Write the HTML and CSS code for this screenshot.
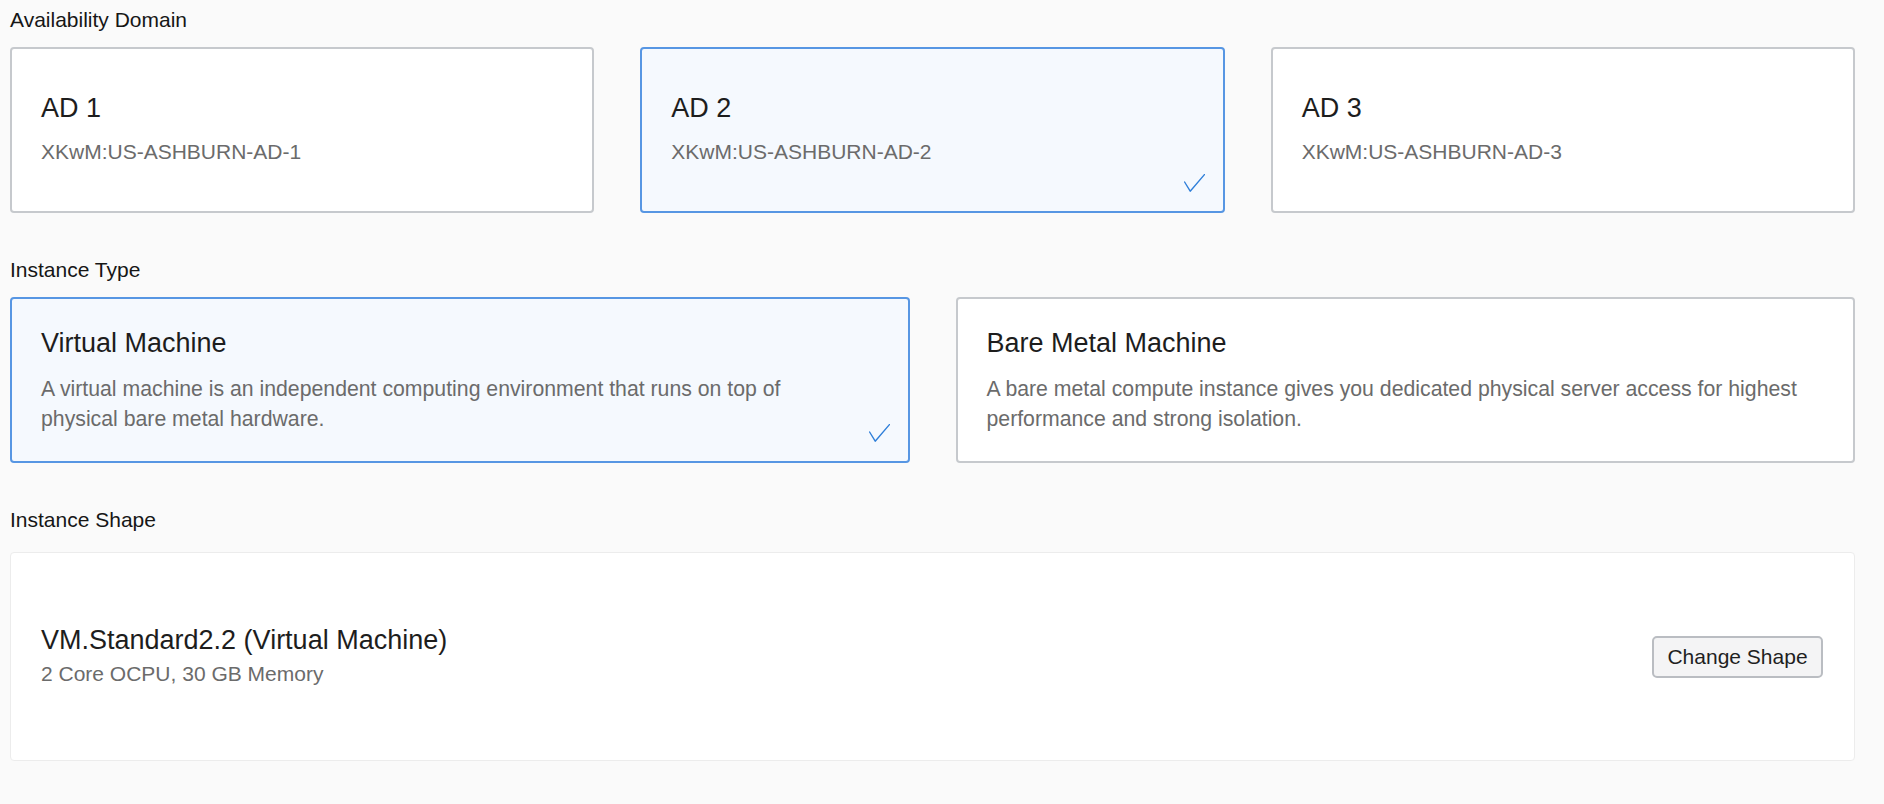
FILE: index.html
```html
<!DOCTYPE html>
<html lang="en">
<head>
<meta charset="utf-8">
<title>Create Instance</title>
<link rel="stylesheet" href="styles.css">
</head>
<body>
<div class="page">
  <section class="field">
    <div class="field-label">Availability Domain</div>
    <div class="options options-3">
      <div class="option option-ad">
        <div class="option-title">AD 1</div>
        <div class="option-text">XKwM:US-ASHBURN-AD-1</div>
      </div>
      <div class="option option-ad option-selected">
        <div class="option-title">AD 2</div>
        <div class="option-text">XKwM:US-ASHBURN-AD-2</div>
        <svg class="check" viewBox="0 0 21 18" aria-hidden="true"><polyline points="0.6,8 6.2,17.2 20.4,0.6"/></svg>
      </div>
      <div class="option option-ad">
        <div class="option-title">AD 3</div>
        <div class="option-text">XKwM:US-ASHBURN-AD-3</div>
      </div>
    </div>
  </section>

  <section class="field">
    <div class="field-label">Instance Type</div>
    <div class="options options-2">
      <div class="option option-selected">
        <div class="option-title">Virtual Machine</div>
        <div class="option-text option-desc">A virtual machine is an independent computing environment that runs on top of physical bare metal hardware.</div>
        <svg class="check" viewBox="0 0 21 18" aria-hidden="true"><polyline points="0.6,8 6.2,17.2 20.4,0.6"/></svg>
      </div>
      <div class="option">
        <div class="option-title">Bare Metal Machine</div>
        <div class="option-text option-desc">A bare metal compute instance gives you dedicated physical server access for highest performance and strong isolation.</div>
      </div>
    </div>
  </section>

  <section class="field field-shape">
    <div class="field-label">Instance Shape</div>
    <div class="shape-card">
      <div class="shape-info">
        <div class="shape-name">VM.Standard2.2 (Virtual Machine)</div>
        <div class="shape-spec">2 Core OCPU, 30 GB Memory</div>
      </div>
      <button class="btn" type="button">Change Shape</button>
    </div>
  </section>
</div>
</body>
</html>
```

FILE: styles.css
```css
html, body {
  margin: 0;
  background: #fafafa;
}

body {
  font-family: "Liberation Sans", Arial, Helvetica, sans-serif;
}

.page {
  padding: 8px 29px 0 10px;
}

.field + .field {
  margin-top: 45px;
}

.field-label {
  font-size: 21px;
  line-height: 24px;
  color: #161616;
  margin-bottom: 15px;
}

.field-shape {
  margin-top: 46px;
}

.field-shape .field-label {
  margin-bottom: 20px;
}

.options {
  display: grid;
  gap: 46px;
}

.options-3 {
  grid-template-columns: repeat(3, 1fr);
}

.options-2 {
  grid-template-columns: repeat(2, 1fr);
}

.option {
  position: relative;
  box-sizing: border-box;
  min-height: 166px;
  border: 2px solid #c6c9cd;
  border-radius: 4px;
  background: #ffffff;
  padding: 0 52px 0 29px;
  display: flex;
  flex-direction: column;
  justify-content: center;
}

.option-ad {
  padding-bottom: 2px;
}

.option-selected {
  border-color: #5796e3;
  background: #f5f9fe;
}

.option-title {
  font-size: 27px;
  line-height: 32px;
  color: #1d1d1d;
  margin-bottom: 15px;
}

.option-ad .option-title {
  margin-bottom: 13px;
}

.option-text {
  font-size: 21px;
  line-height: 30px;
  color: #6b6b6b;
}

.option-desc {
  font-size: 21.25px;
}

.check {
  position: absolute;
  right: 18px;
  bottom: 19px;
  width: 21px;
  height: 18px;
  fill: none;
  stroke: #2f7fd9;
  stroke-width: 1.4;
  stroke-linecap: round;
  stroke-linejoin: round;
}

.shape-card {
  box-sizing: border-box;
  height: 209px;
  background: #ffffff;
  border: 1px solid #ececec;
  border-radius: 4px;
  padding: 0 31px 0 30px;
  display: flex;
  align-items: center;
  justify-content: space-between;
}

.shape-name {
  font-size: 27px;
  line-height: 32px;
  color: #1d1d1d;
  margin-bottom: 3px;
}

.shape-spec {
  font-size: 21px;
  line-height: 30px;
  color: #6b6b6b;
}

.btn {
  box-sizing: border-box;
  width: 171px;
  height: 42px;
  padding: 0;
  font-family: inherit;
  font-size: 21px;
  line-height: 24px;
  color: #1f1f1f;
  background: #f4f4f5;
  border: 2px solid #babdc2;
  border-radius: 5px;
  text-align: center;
}
```
